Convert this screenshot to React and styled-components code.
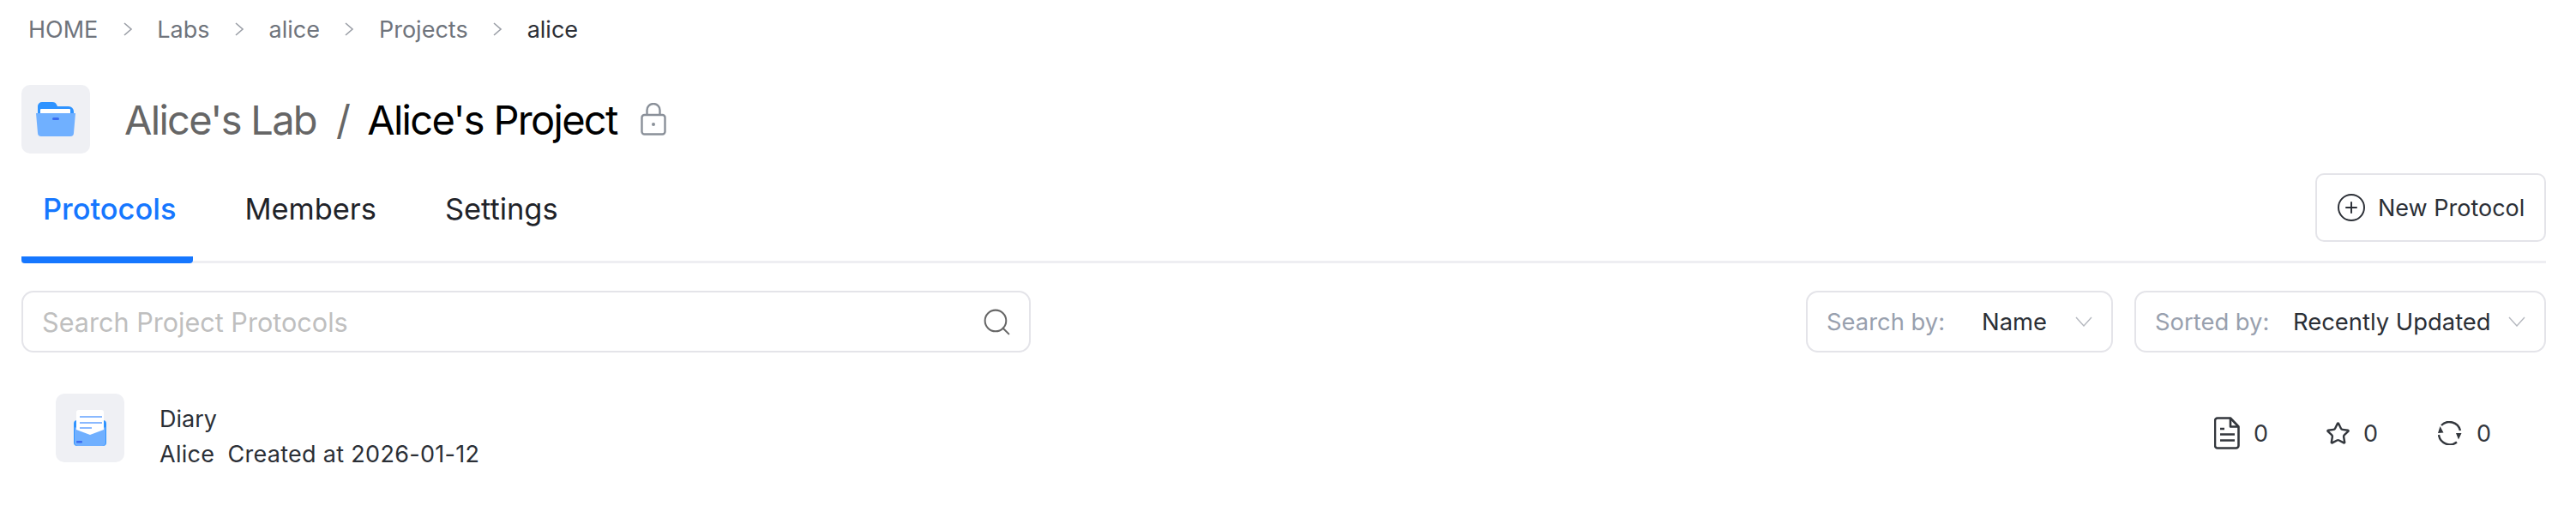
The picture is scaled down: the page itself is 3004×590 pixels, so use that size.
import React from 'react';
import styled, { createGlobalStyle } from 'styled-components';
import { Search, CirclePlus, Star } from 'lucide-react';

const GlobalStyle = createGlobalStyle`
  html, body {
    margin: 0;
    padding: 0;
    background: #fff;
    overflow: hidden;
  }
  * {
    box-sizing: border-box;
  }
  body {
    font-family: Inter, "Liberation Sans", sans-serif;
    color: #2b2f36;
  }
`;

const Page = styled.div`
  width: 3004px;
  height: 590px;
  padding: 0 35px 0 25px;
`;

const Breadcrumb = styled.nav`
  display: flex;
  align-items: center;
  gap: 28.5px;
  height: 68px;
  padding-left: 8px;
  font-size: 27px;
  color: #6f747c;
`;

const Crumb = styled.span`
  color: ${(p) => (p.$current ? '#2b2f36' : '#6f747c')};
`;

const TitleRow = styled.div`
  display: flex;
  align-items: center;
  height: 80px;
  margin-top: 31px;
`;

const IconBox = styled.div`
  display: flex;
  flex: none;
  align-items: center;
  justify-content: center;
  width: 80px;
  height: 80px;
  border-radius: 10px;
  background: #eff0f4;
`;

const Title = styled.h1`
  display: flex;
  align-items: center;
  margin: 0 0 0 40px;
  font-size: 47px;
  font-weight: 400;
  letter-spacing: -1.7px;
  color: #000;
`;

const LabName = styled.span`
  color: #666;
`;

const Slash = styled.span`
  margin: 0 21px 0 23px;
  color: #666;
`;

const LockIcon = styled.svg`
  margin-left: 27px;
`;

const TabBar = styled.div`
  display: flex;
  align-items: flex-start;
  justify-content: space-between;
  height: 128px;
  padding-top: 23px;
  border-bottom: 3px solid #eeeef2;
`;

const Tabs = styled.div`
  display: flex;
  gap: 35px;
  margin-top: -23px;
`;

const Tab = styled.div`
  display: flex;
  align-items: center;
  height: 128px;
  padding: 8px 20px 0 25px;
  font-size: 34.4px;
  font-weight: ${(p) => (p.$active ? 500 : 400)};
  color: ${(p) => (p.$active ? '#1677ff' : '#1f2329')};
  border-bottom: 8px solid ${(p) => (p.$active ? '#1677ff' : 'transparent')};
  border-radius: 0 0 4px 4px;
`;

const NewButton = styled.button`
  display: flex;
  align-items: center;
  gap: 13px;
  width: 269px;
  height: 80px;
  padding: 0 0 0 22px;
  font: inherit;
  font-size: 27px;
  color: #2b2f36;
  background: #fff;
  border: 2px solid #e4e4e9;
  border-radius: 10px;
`;

const Toolbar = styled.div`
  display: flex;
  align-items: center;
  justify-content: space-between;
  margin-top: 32px;
`;

const SearchBox = styled.div`
  display: flex;
  align-items: center;
  justify-content: space-between;
  width: 1177px;
  height: 72px;
  padding: 0 19px 0 22px;
  font-size: 30.6px;
  color: #bfbfbf;
  border: 2px solid #e4e4e9;
  border-radius: 14px;
`;

const Filters = styled.div`
  display: flex;
  gap: 25px;
`;

const Select = styled.div`
  display: flex;
  align-items: center;
  width: ${(p) => p.$width}px;
  height: 72px;
  padding: 0 22px 0 22px;
  font-size: 27.4px;
  border: 2px solid #e4e4e9;
  border-radius: 14px;
`;

const SelectLabel = styled.span`
  width: ${(p) => p.$width}px;
  color: #98a0ae;
`;

const SelectValue = styled.span`
  flex: 1;
  color: #2b2f36;
`;

const ProtocolRow = styled.div`
  display: flex;
  align-items: flex-start;
  justify-content: space-between;
  margin-top: 48px;
  padding: 0 64px 0 40px;
`;

const RowMain = styled.div`
  display: flex;
  align-items: flex-start;
  gap: 41px;
`;

const RowText = styled.div`
  display: flex;
  flex-direction: column;
  gap: 11px;
  padding-top: 15px;
  font-size: 27px;
  line-height: 30px;
  color: #2b2f36;
`;

const Meta = styled.div`
  display: flex;
  gap: 15px;
  letter-spacing: 0.3px;
`;

const Stats = styled.div`
  display: flex;
  align-items: center;
  padding-top: 27px;
`;

const Stat = styled.div`
  display: flex;
  align-items: center;
  gap: ${(p) => p.$gap || 17}px;
  width: ${(p) => (p.$width ? `${p.$width}px` : 'auto')};
  font-size: 27px;
  color: #33373d;
`;

const CrumbSep = () => (
  <svg width="12" height="18" viewBox="0 0 12 18" fill="none" stroke="#9a9ea6" strokeWidth="1.6">
    <path d="M2 2l8 7-8 7" />
  </svg>
);

const SelectArrow = () => (
  <svg width="20" height="12" viewBox="0 0 20 12" fill="none" stroke="#b5b8bf" strokeWidth="1.4">
    <path d="M1 1l9 10 9-10" />
  </svg>
);

const FolderIcon = () => (
  <svg width="46" height="40" viewBox="0 0 46 40">
    <path d="M2 20V5a5 5 0 0 1 5-5h12c3 0 4 1 5 3l1 2h13a6 6 0 0 1 6 6v9z" fill="#2e93ff" />
    <rect x="5" y="8" width="35" height="10" rx="1" fill="#fff" />
    <path d="M0 13h46l-2 23a4 4 0 0 1-4 4H6a4 4 0 0 1-4-4z" fill="#70b0ff" />
    <rect x="19" y="18" width="8" height="3" rx="1.500" fill="#3a6cf0" />
  </svg>
);

const MailIcon = () => (
  <svg width="38" height="42" viewBox="0 0 38 42">
    <rect x="0" y="12" width="38" height="30" rx="4" fill="#2e93ff" />
    <path d="M1 20l18 7 18-7v18a4 4 0 0 1-4 4H5a4 4 0 0 1-4-4z" fill="#70b0ff" />
    <path d="M3 3a3 3 0 0 1 3-3h26a3 3 0 0 1 3 3v20l-16 6-16-6z" fill="#fff" />
    <rect x="7" y="7" width="26" height="2" fill="#8ab9ff" />
    <rect x="7" y="14" width="26" height="2" fill="#8ab9ff" />
    <rect x="7" y="20" width="14" height="2" fill="#8ab9ff" />
    <rect x="3" y="36" width="7" height="2.500" rx="1" fill="#3a6cf0" />
  </svg>
);

const Lock = () => (
  <LockIcon width="30" height="38" viewBox="0 0 30 38" fill="none" stroke="#8a9099" strokeWidth="2.4">
    <path d="M7.500 14V8.500a7.500 7.500 0 0 1 15 0V14" />
    <rect x="1.500" y="14" width="27" height="22.500" rx="3" />
    <circle cx="15" cy="25" r="2" fill="#8a9099" stroke="none" />
  </LockIcon>
);

const FileIcon = () => (
  <svg width="30" height="38" viewBox="0 0 30 38" fill="none" stroke="#33373d" strokeWidth="2.6" strokeLinejoin="round">
    <path d="M4 1.500h15l9.500 10v22a3 3 0 0 1-3 3H4a3 3 0 0 1-3-3v-29a3 3 0 0 1 3-3z" />
    <path d="M19 2v9.500h9" />
    <path d="M7 14h5M7 20.500h17M7 27.500h17" />
  </svg>
);

const SyncIcon = () => (
  <svg width="28" height="28" viewBox="0 0 28 28" fill="none">
    <path d="M4 5A13 13 0 0 1 26 11M22 24.500A13 13 0 0 1 1 16" stroke="#33373d" strokeWidth="2.400" />
    <path d="M2.500 6L0 14l6.500-.5zM21 14h6.500L24 21.500z" fill="#33373d" />
  </svg>
);

export default function App() {
  return (
    <Page>
      <GlobalStyle />
      <Breadcrumb>
        <Crumb>HOME</Crumb>
        <CrumbSep />
        <Crumb>Labs</Crumb>
        <CrumbSep />
        <Crumb>alice</Crumb>
        <CrumbSep />
        <Crumb>Projects</Crumb>
        <CrumbSep />
        <Crumb $current>alice</Crumb>
      </Breadcrumb>

      <TitleRow>
        <IconBox><FolderIcon /></IconBox>
        <Title>
          <LabName>Alice's Lab</LabName>
          <Slash>/</Slash>
          Alice's Project
          <Lock />
        </Title>
      </TitleRow>

      <TabBar>
        <Tabs>
          <Tab $active>Protocols</Tab>
          <Tab>Members</Tab>
          <Tab>Settings</Tab>
        </Tabs>
        <NewButton><CirclePlus size={36} strokeWidth={1.3} />New Protocol</NewButton>
      </TabBar>

      <Toolbar>
        <SearchBox>
          Search Project Protocols
          <Search size={37} strokeWidth={1.3} color="#666" />
        </SearchBox>
        <Filters>
          <Select $width={358}>
            <SelectLabel $width={181}>Search by:</SelectLabel>
            <SelectValue>Name</SelectValue>
            <SelectArrow />
          </Select>
          <Select $width={480}>
            <SelectLabel $width={161}>Sorted by:</SelectLabel>
            <SelectValue>Recently Updated</SelectValue>
            <SelectArrow />
          </Select>
        </Filters>
      </Toolbar>

      <ProtocolRow>
        <RowMain>
          <IconBox><MailIcon /></IconBox>
          <RowText>
            <div>Diary</div>
            <Meta><span>Alice</span><span>Created at 2026-01-12</span></Meta>
          </RowText>
        </RowMain>
        <Stats>
          <Stat $width={130} $gap={16}><FileIcon />0</Stat>
          <Stat $width={131} $gap={15}><Star size={29} strokeWidth={2} />0</Stat>
          <Stat><SyncIcon />0</Stat>
        </Stats>
      </ProtocolRow>
    </Page>
  );
}
